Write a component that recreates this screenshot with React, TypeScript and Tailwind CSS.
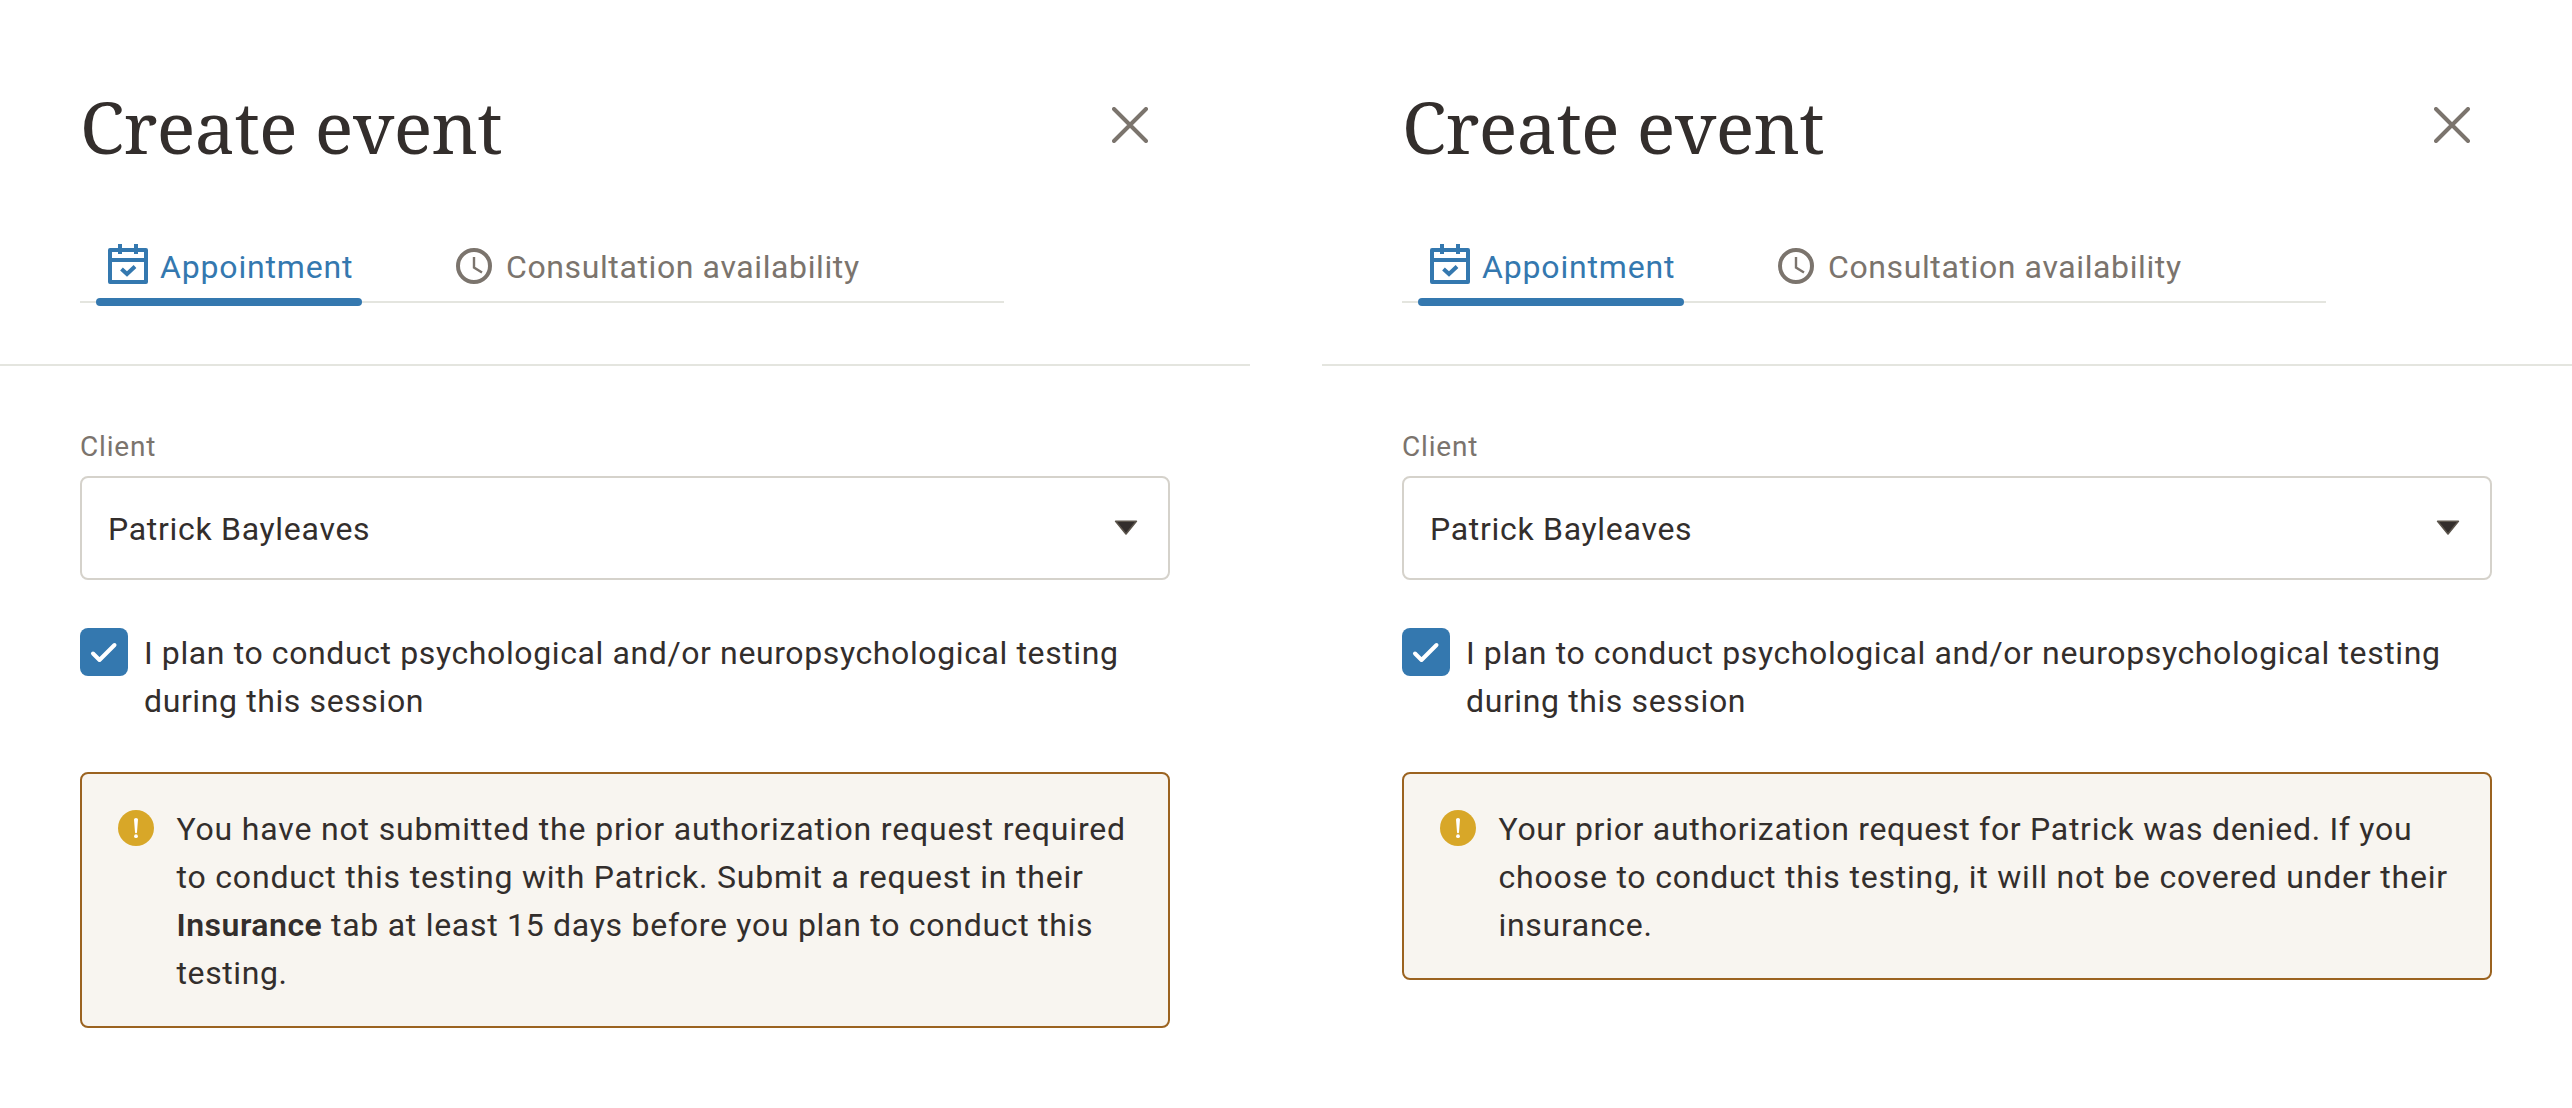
import type { ReactNode } from 'react';

function CloseIcon() {
  return (
    <svg className="h-9 w-9" viewBox="0 0 36 36" fill="none" stroke="currentColor" strokeWidth="4" strokeLinecap="round">
      <path d="M2 2L34 34M34 2L2 34" />
    </svg>
  );
}

function CalendarIcon() {
  return (
    <svg className="h-10 w-10" viewBox="0 0 40 40" fill="none" stroke="currentColor" strokeWidth="4">
      <path d="M2 6H38V38H2Z" strokeLinejoin="round" />
      <path d="M2 16H38M12 0V10M28 0V10" />
      <path d="M13.5 25L19 30L27 22.5" strokeLinejoin="miter" />
    </svg>
  );
}

function ClockIcon() {
  return (
    <svg className="h-9 w-9" viewBox="0 0 36 36" fill="none" stroke="currentColor">
      <circle cx="18" cy="18" r="16" strokeWidth="4" />
      <path d="M18 9V19.5L26 24.5" strokeWidth="2.4" />
    </svg>
  );
}

function CheckIcon() {
  return (
    <svg className="h-12 w-12" viewBox="0 0 48 48" fill="none" stroke="currentColor" strokeWidth="4" strokeLinecap="round" strokeLinejoin="round">
      <path d="M13 25.5L19.5 32L34.5 17" />
    </svg>
  );
}

function WarningIcon() {
  return (
    <svg className="h-9 w-9 shrink-0" viewBox="0 0 36 36">
      <circle cx="18" cy="18" r="18" fill="#d8a728" />
      <path d="M16 9.6a2 1.6 0 0 1 4 0L19 22.2a1 1 0 0 1-2 0Z" fill="white" />
      <circle cx="18" cy="26.2" r="1.9" fill="white" />
    </svg>
  );
}

function EventPanel({ children }: { children: ReactNode }) {
  return (
    <section className="w-[1250px] shrink-0">
      <header className="h-[366px] border-b-2 border-[#e4e5df] px-20">
        <div className="flex items-start justify-between pt-[74px]">
          <h1 className="font-['Noto_Serif','Liberation_Serif',serif] text-[72px] leading-[104px] tracking-[-0.7px]">Create event</h1>
          <button className="mt-[33px] mr-[22px] text-[#7b746d]" aria-label="Close">
            <CloseIcon />
          </button>
        </div>
        <nav className="mt-[50px] flex h-[75px] w-[924px] border-b-2 border-[#e4e5df] pl-4">
          <a className="relative flex w-[266px] items-start pt-4 pl-3 text-[#3478af]">
            <CalendarIcon />
            <span className="-mt-px ml-3 tracking-[0.84px]">Appointment</span>
            <span className="absolute -bottom-[5px] left-0 h-2 w-[266px] rounded-full bg-[#3478af]" />
          </a>
          <a className="ml-[94px] flex items-start pt-5 text-[#7b746d]">
            <ClockIcon />
            <span className="-mt-[5px] ml-[14px] tracking-[0.61px]">Consultation availability</span>
          </a>
        </nav>
      </header>
      <div className="px-20 pt-[59px]">
        <label className="block text-[28px] leading-[44px] tracking-[0.8px] text-[#7b746d]">Client</label>
        <div className="mt-[7px] flex h-[104px] items-center justify-between rounded-lg border-2 border-[#d5d2cb] pr-[30px] pl-[26px]">
          <span className="pt-0.5 tracking-[0.7px]">Patrick Bayleaves</span>
          <svg className="h-4 w-6" viewBox="0 0 24 16" fill="#332e2c" stroke="#5b544b" strokeWidth="1.6" strokeLinejoin="round">
            <path d="M1.6 1.3H22.4L12 14Z" />
          </svg>
        </div>
        <div className="mt-12 flex">
          <span className="h-12 w-12 shrink-0 rounded-lg bg-[#3478af] text-white">
            <CheckIcon />
          </span>
          <p className="ml-4 pt-px leading-[48px] tracking-[0.61px]">
            I plan to conduct psychological and/or neuropsychological testing
            <br />
            during this session
          </p>
        </div>
        <div className="mt-[47px] flex rounded-lg border-2 border-[#9b6320] bg-[#f8f5f0] pt-[31px] pb-[29px] pl-9">
          <div className="pt-[5px]">
            <WarningIcon />
          </div>
          <p className="ml-[22.5px] leading-[48px] tracking-[0.8px]">{children}</p>
        </div>
      </div>
    </section>
  );
}

export default function App() {
  return (
    <main className="flex h-[1108px] gap-[72px] overflow-hidden bg-white font-['Roboto',sans-serif] text-[32px] leading-[48px] whitespace-nowrap text-[#332e2c]">
      <EventPanel>
        <span className="tracking-[0.83px]">You have not submitted the prior authorization request required</span>
        <br />
        <span className="tracking-[0.81px]">to conduct this testing with Patrick. Submit a request in their</span>
        <br />
        <span className="tracking-[0.72px]">
          <strong className="font-semibold tracking-[0.5px]">Insurance</strong> tab at least 15 days before you plan to conduct this
        </span>
        <br />
        <span className="tracking-[0.6px]">testing.</span>
      </EventPanel>
      <EventPanel>
        <span className="tracking-[0.71px]">Your prior authorization request for Patrick was denied. If you</span>
        <br />
        choose to conduct this testing, it will not be covered under their
        <br />
        <span className="tracking-[0.7px]">insurance.</span>
      </EventPanel>
    </main>
  );
}
